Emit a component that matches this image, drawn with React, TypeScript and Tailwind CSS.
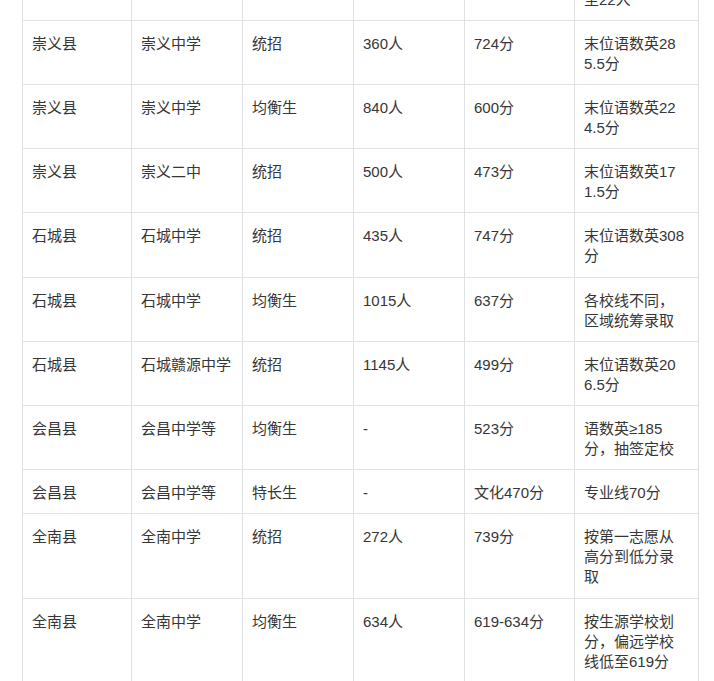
import React from "react";

type Row = { c: string[]; last: string[]; extra?: boolean };

const prev: Row = { c: ["", "", "", "", ""], last: ["", "", "至22人"] };

const rows: Row[] = [
  { c: ["崇义县", "崇义中学", "统招", "360人", "724分"], last: ["末位语数英28", "5.5分"] },
  { c: ["崇义县", "崇义中学", "均衡生", "840人", "600分"], last: ["末位语数英22", "4.5分"] },
  { c: ["崇义县", "崇义二中", "统招", "500人", "473分"], last: ["末位语数英17", "1.5分"] },
  { c: ["石城县", "石城中学", "统招", "435人", "747分"], last: ["末位语数英308", "分"], extra: true },
  { c: ["石城县", "石城中学", "均衡生", "1015人", "637分"], last: ["各校线不同，", "区域统筹录取"] },
  { c: ["石城县", "石城赣源中学", "统招", "1145人", "499分"], last: ["末位语数英20", "6.5分"] },
  { c: ["会昌县", "会昌中学等", "均衡生", "-", "523分"], last: ["语数英≥185", "分，抽签定校"] },
  { c: ["会昌县", "会昌中学等", "特长生", "-", "文化470分"], last: ["专业线70分"] },
  { c: ["全南县", "全南中学", "统招", "272人", "739分"], last: ["按第一志愿从", "高分到低分录", "取"], extra: true },
  { c: ["全南县", "全南中学", "均衡生", "634人", "619-634分"], last: ["按生源学校划", "分，偏远学校", "线低至619分"] },
];

const base =
  "border border-[#dfe2e5] align-top pl-[9px] pr-[6px] pt-[13px] whitespace-nowrap text-left font-normal";

function TableRow({ r }: { r: Row }) {
  const cell = base + (r.extra ? " pb-[11px]" : " pb-[10px]");
  return (
    <tr>
      {r.c.map((t, i) => (
        <td key={i} className={cell}>
          {t}
        </td>
      ))}
      <td className={cell}>
        {r.last.map((l, i) => (
          <div key={i} className="h-[20px]">
            {l}
          </div>
        ))}
      </td>
    </tr>
  );
}

export default function App() {
  return (
    <div
      className="w-[714px] h-[681px] overflow-hidden bg-white text-[#363636] text-[15px] leading-[20px]"
      style={{ fontFamily: '"Liberation Sans", "Noto Sans CJK SC", sans-serif' }}
    >
      <table className="ml-[22px] mt-[-64px] w-[676px] table-fixed border-collapse">
        <colgroup>
          <col className="w-[109px]" />
          <col className="w-[111px]" />
          <col className="w-[111px]" />
          <col className="w-[111px]" />
          <col className="w-[110px]" />
          <col className="w-[124px]" />
        </colgroup>
        <tbody>
          <TableRow r={prev} />
          {rows.map((r, i) => (
            <TableRow key={i} r={r} />
          ))}
        </tbody>
      </table>
    </div>
  );
}
